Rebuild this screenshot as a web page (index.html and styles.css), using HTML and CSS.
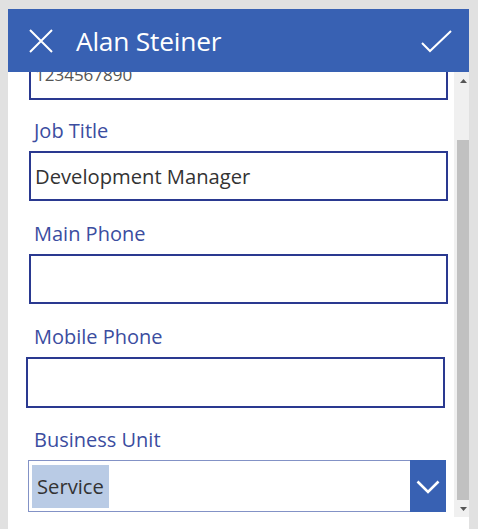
FILE: index.html
```html
<!DOCTYPE html>
<html>
<head>
<meta charset="utf-8">
<link rel="stylesheet" href="styles.css">
</head>
<body>
<div class="app">
  <header class="header">
    <svg class="icon-close" width="24" height="24" viewBox="0 0 24 24"><path d="M1 1 L23 23 M23 1 L1 23" stroke="#fff" stroke-width="2" fill="none"/></svg>
    <span class="title">Alan Steiner</span>
    <svg class="icon-check" width="31" height="23" viewBox="0 0 31 23"><path d="M1 13 L9 21 L30 1" stroke="#fff" stroke-width="2" fill="none"/></svg>
  </header>
  <div class="main">
    <div class="form">
      <div class="field field-first">
        <div class="input input-small">1234567890</div>
      </div>
      <div class="field field-job">
        <div class="label">Job Title</div>
        <div class="input">Development Manager</div>
      </div>
      <div class="field field-main">
        <div class="label">Main Phone</div>
        <div class="input"></div>
      </div>
      <div class="field field-mobile">
        <div class="label">Mobile Phone</div>
        <div class="input input-mobile"></div>
      </div>
      <div class="field field-bu">
        <div class="label">Business Unit</div>
        <div class="dropdown">
          <div class="dd-value"><span class="dd-sel">Service</span></div>
          <div class="dd-btn"><svg width="24" height="14" viewBox="0 0 24 14"><path d="M1.5 1.5 L12 12 L22.5 1.5" stroke="#fff" stroke-width="2.6" fill="none"/></svg></div>
        </div>
      </div>
    </div>
    <div class="scrollbar">
      <div class="sb-arrow"><svg width="7" height="4" viewBox="0 0 7 4"><path d="M0 4 L3.5 0 L7 4 Z" fill="#555"/></svg></div>
      <div class="sb-track"><div class="sb-thumb"></div></div>
      <div class="sb-arrow"><svg width="7" height="4" viewBox="0 0 7 4"><path d="M0 0 L3.5 4 L7 0 Z" fill="#555"/></svg></div>
    </div>
  </div>
</div>
</body>
</html>
```
FILE: styles.css
```css
html, body {
  margin: 0;
  padding: 0;
}
body {
  background: #e1e1e1;
  font-family: "Open Sans", "Noto Sans", sans-serif;
  width: 478px;
  height: 529px;
  overflow: hidden;
}
.app {
  margin: 9px 0 0 8px;
  width: 461px;
  height: 520px;
  background: #fff;
  display: flex;
  flex-direction: column;
}
.header {
  height: 63px;
  flex: none;
  background: #3861b3;
  display: flex;
  align-items: center;
  padding: 0 17px 0 21px;
  color: #fff;
}
.icon-close {
  flex: none;
  margin-top: 1px;
}
.title {
  flex: 1;
  margin-left: 23px;
  font-size: 26.3px;
  line-height: 30px;
  letter-spacing: -0.2px;
}
.icon-check {
  flex: none;
  margin-top: 1px;
}
.main {
  flex: 1;
  display: flex;
  min-height: 0;
}
.form {
  flex: 1;
  overflow: hidden;
  padding: 0 6px 0 21px;
}
.field-first {
  margin-top: -22px;
}
.field-job { padding-top: 19px; }
.field-main { padding-top: 21px; }
.field-mobile { padding-top: 21px; }
.field-bu { padding-top: 20px; }
.label {
  color: #3b4da0;
  font-size: 20px;
  line-height: 24px;
  height: 24px;
  margin-bottom: 8px;
  padding-left: 5px;
}
.input {
  box-sizing: border-box;
  height: 50px;
  border: 2px solid #2a3990;
  padding: 0 4px;
  font-size: 20.2px;
  line-height: 46px;
  color: #333;
  white-space: nowrap;
}
.input-small {
  font-size: 17px;
  color: #555;
}
.input-mobile {
  height: 51px;
  margin-left: -3px;
  margin-right: 3px;
}
.dropdown {
  box-sizing: border-box;
  height: 52px;
  margin-left: -1px;
  margin-right: 2px;
  border: 1px solid #8392c6;
  display: flex;
}
.dd-value {
  flex: 1;
  padding: 4px 0 3px 3px;
  display: flex;
}
.dd-sel {
  background: #b9cbe5;
  color: #333;
  font-size: 20.2px;
  line-height: 43px;
  padding: 0 5px 0 5px;
}
.dd-btn {
  width: 36px;
  margin: -1px -1px -1px 0;
  background: #3861b3;
  display: flex;
  align-items: center;
  justify-content: center;
}
.dd-btn svg {
  margin-top: 1px;
}
.scrollbar {
  flex: none;
  width: 15px;
  height: 445px;
  background: #f0f0f0;
  display: flex;
  flex-direction: column;
}
.sb-arrow {
  height: 17px;
  display: flex;
  align-items: center;
  justify-content: center;
  padding-left: 3px;
}
.sb-track {
  flex: 1;
  padding: 51px 0 0 3px;
  display: flex;
  flex-direction: column;
}
.sb-thumb {
  flex: 1;
  background: #c1c1c1;
}
```
